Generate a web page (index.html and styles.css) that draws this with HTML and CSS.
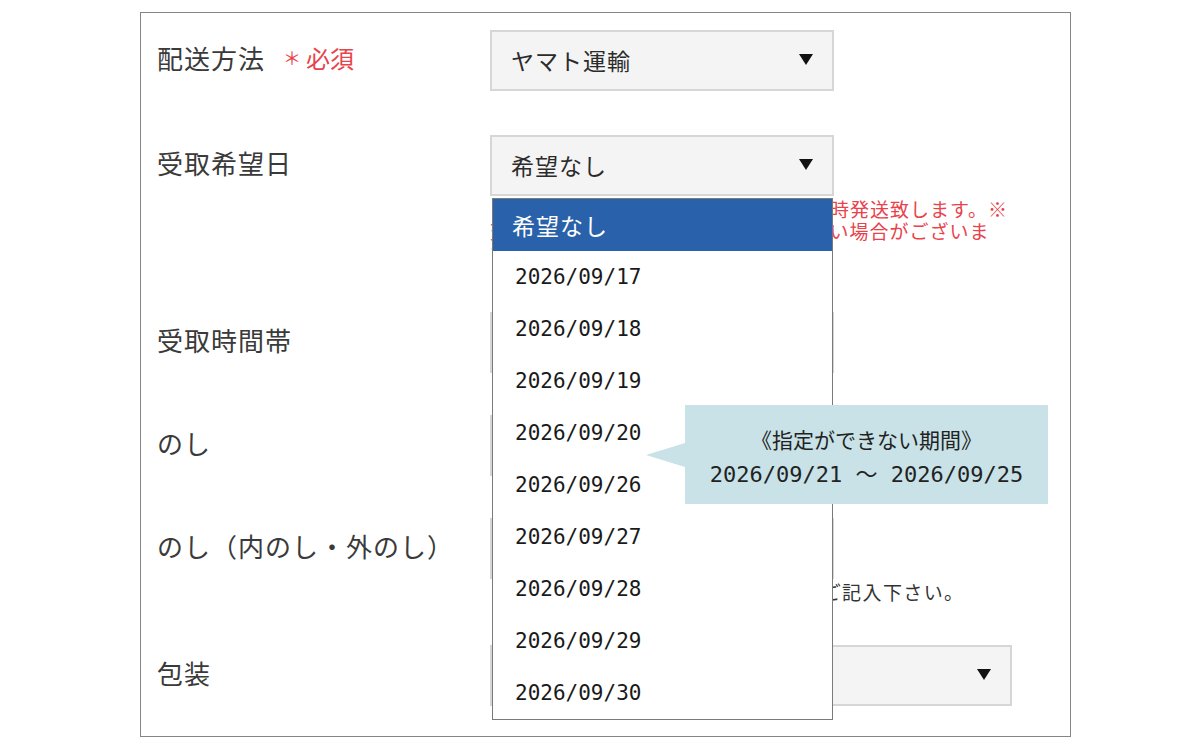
FILE: index.html
```html
<!DOCTYPE html>
<html lang="ja">
<head>
<meta charset="utf-8">
<title>配送情報</title>
<link rel="stylesheet" href="styles.css">
</head>
<body>
<div class="panel">
  <div class="row">
    <div class="label">配送方法<span class="req"><span class="req-mark">＊</span>必須</span></div>
    <div class="field">
      <div class="select"><span class="value">ヤマト運輸</span><i class="caret"></i></div>
    </div>
  </div>

  <div class="row row--date">
    <div class="label">受取希望日</div>
    <div class="field">
      <div class="select-wrap">
        <div class="select"><span class="value">希望なし</span><i class="caret"></i></div>
        <ul class="dropdown">
          <li class="option option--selected">希望なし</li>
          <li class="option num">2026/09/17</li>
          <li class="option num">2026/09/18</li>
          <li class="option num">2026/09/19</li>
          <li class="option num">2026/09/20</li>
          <li class="option num">2026/09/26</li>
          <li class="option num">2026/09/27</li>
          <li class="option num">2026/09/28</li>
          <li class="option num">2026/09/29</li>
          <li class="option num">2026/09/30</li>
          <li class="tip">
            <span class="tip-title">《指定ができない期間》</span>
            <span class="tip-range num">2026/09/21 〜 2026/09/25</span>
          </li>
        </ul>
      </div>
      <p class="note note--alert">※ご指定がない場合は準備出来次第随時発送致します。※天候・交通事情によりご希望に添えない場合がございます。</p>
    </div>
  </div>

  <div class="row row--time">
    <div class="label">受取時間帯</div>
    <div class="field">
      <div class="select"><span class="value">指定なし</span><i class="caret"></i></div>
    </div>
  </div>

  <div class="row">
    <div class="label">のし</div>
    <div class="field">
      <div class="select"><span class="value">不要</span><i class="caret"></i></div>
    </div>
  </div>

  <div class="row">
    <div class="label">のし（内のし・外のし）</div>
    <div class="field">
      <div class="select"><span class="value">内のし</span><i class="caret"></i></div>
      <p class="note note--wide">※ 名入れをご希望の場合は備考欄にご記入下さい。</p>
    </div>
  </div>

  <div class="row">
    <div class="label">包装</div>
    <div class="field">
      <div class="select select--wide"><span class="value">包装なし</span><i class="caret"></i></div>
    </div>
  </div>
</div>
</body>
</html>
```

FILE: styles.css
```css
html, body {
  margin: 0;
  padding: 0;
  background: #ffffff;
}

body {
  font-family: "Noto Sans CJK JP", "Noto Sans", sans-serif;
  color: #333333;
}

.panel {
  box-sizing: border-box;
  width: 931px;
  margin: 12px 0 0 140px;
  padding: 17px 16px 30px;
  border: 1px solid #858585;
  background: #ffffff;
}

/* form rows: label column + field column */
.row {
  display: grid;
  grid-template-columns: 333px 1fr;
  align-items: start;
  margin-top: 42px;
}

.row:first-child {
  margin-top: 0;
}

.row--date {
  margin-top: 44px;
}

.row--time {
  margin-top: 48px;
}

.label {
  box-sizing: border-box;
  height: 61px;
  padding-bottom: 7px;
  display: flex;
  align-items: center;
  font-size: 26px;
  letter-spacing: 1px;
  color: #3a3a3a;
  white-space: nowrap;
}

.req {
  margin-left: 18px;
  font-size: 24px;
  letter-spacing: 0;
  color: #e8434b;
  display: inline-flex;
  align-items: center;
}

.req-mark {
  font-size: 18px;
  margin-right: 5px;
}

.field {
  display: flex;
  flex-direction: column;
  align-items: flex-start;
}

/* select boxes */
.select-wrap {
  position: relative;
}

.select {
  box-sizing: border-box;
  width: 344px;
  height: 61px;
  display: flex;
  align-items: center;
  justify-content: space-between;
  padding: 0 19px 2px 19px;
  background: #f4f4f4;
  border: 2px solid #d6d6d6;
  font-size: 23px;
  letter-spacing: 1px;
  color: #2b2b2b;
}

.select--wide {
  width: 522px;
}

.caret {
  width: 0;
  height: 0;
  border-left: 7.5px solid transparent;
  border-right: 7.5px solid transparent;
  border-top: 11px solid #111111;
}

/* notes under fields */
.note {
  box-sizing: border-box;
  width: 524px;
  margin: 2px 0 0;
  font-size: 19px;
  line-height: 22px;
  letter-spacing: 1px;
  color: #333333;
}

.note--alert {
  color: #e8434b;
  line-break: strict;
}

.note--wide {
  letter-spacing: 1.4px;
}

/* open date list */
.dropdown {
  position: absolute;
  z-index: 2;
  top: 63px;
  left: 2px;
  box-sizing: border-box;
  width: 341px;
  margin: 0;
  padding: 0;
  list-style: none;
  background: #ffffff;
  border: 1px solid #7a7a7a;
}

.option {
  height: 52px;
  display: flex;
  align-items: center;
  padding-left: 19px;
  font-size: 23px;
  color: #111111;
}

.option--selected {
  background: #2962aa;
  color: #ffffff;
  letter-spacing: 1px;
}

.num {
  font-family: "DejaVu Sans Mono", "Noto Sans CJK JP", monospace;
}

.option.num {
  font-size: 21px;
  padding-left: 22px;
  color: #1a1a1a;
}

/* blocked-period hint next to the list */
.tip {
  position: absolute;
  left: 192px;
  top: 206px;
  box-sizing: border-box;
  width: 363px;
  height: 99px;
  padding-top: 17px;
  display: flex;
  flex-direction: column;
  align-items: center;
  background: #c8e2e7;
  color: #222222;
  line-height: 35px;
}

.tip::before {
  content: "";
  position: absolute;
  left: -39px;
  top: 38px;
  width: 0;
  height: 0;
  border-top: 12.5px solid transparent;
  border-bottom: 12.5px solid transparent;
  border-right: 39px solid #c8e2e7;
}

.tip-title {
  font-size: 21px;
}

.tip-range {
  font-size: 22px;
}
```
